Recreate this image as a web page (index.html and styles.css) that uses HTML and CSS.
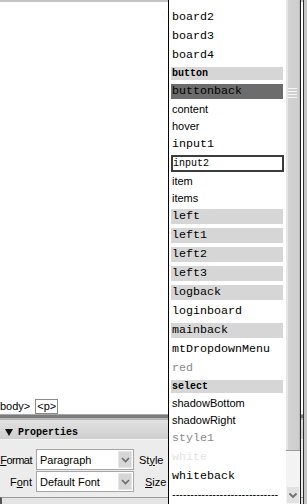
FILE: index.html
```html
<!DOCTYPE html>
<html>
<head>
<meta charset="utf-8">
<link rel="stylesheet" href="styles.css">
</head>
<body>
<div class="screen">
  <div class="main">
    <div class="canvas"></div>
    <div class="tagbar"><span class="tag">body&gt;</span><span class="tag cur">&lt;p&gt;</span></div>
    <div class="sep"></div>
    <div class="phead"><span class="tri"></span><span class="ptitle">Properties</span></div>
    <div class="props">
      <div class="row">
        <span class="lbl tight"><u>F</u>ormat</span>
        <div class="select"><span class="val">Paragraph</span><span class="arrow"><svg width="9" height="6" viewBox="0 0 9 6"><path d="M1 1 L4.5 4.5 L8 1" fill="none" stroke="#6a6a6a" stroke-width="1.6"/></svg></span></div>
        <span class="lbl2">St<u>y</u>le</span>
      </div>
      <div class="row">
        <span class="lbl">F<u>o</u>nt</span>
        <div class="select"><span class="val">Default Font</span><span class="arrow"><svg width="9" height="6" viewBox="0 0 9 6"><path d="M1 1 L4.5 4.5 L8 1" fill="none" stroke="#6a6a6a" stroke-width="1.6"/></svg></span></div>
        <span class="lbl2 right"><u>S</u>ize</span>
      </div>
    </div>
    <div class="pfoot"></div>
  </div>
  <div class="edge"></div>

  <div class="popup">
    <ul class="list">
      <li class="m">board2</li>
      <li class="m">board3</li>
      <li class="m">board4</li>
      <li class="t hl">button</li>
      <li class="m dk">buttonback</li>
      <li class="s">content</li>
      <li class="s">hover</li>
      <li class="m">input1</li>
      <li class="box">input2</li>
      <li class="s">item</li>
      <li class="s">items</li>
      <li class="m hl">left</li>
      <li class="m hl">left1</li>
      <li class="m hl">left2</li>
      <li class="m hl">left3</li>
      <li class="m hl">logback</li>
      <li class="m">loginboard</li>
      <li class="m hl">mainback</li>
      <li class="m">mtDropdownMenu</li>
      <li class="m gray">red</li>
      <li class="t hl">select</li>
      <li class="s">shadowBottom</li>
      <li class="s">shadowRight</li>
      <li class="m gray">style1</li>
      <li class="m faint">white</li>
      <li class="m">whiteback</li>
      <li class="s dash">-----------------------------</li>
    </ul>
    <div class="sb">
      <div class="thumb"><div class="grip"><i></i><i></i><i></i><i></i></div></div>
      <div class="track"></div>
      <div class="sbbtn"><svg width="10" height="7" viewBox="0 0 10 7"><path d="M1.5 1.5 L5 5 L8.5 1.5" fill="none" stroke="#6f6f6f" stroke-width="1.8"/></svg></div>
    </div>
  </div>
</div>
</body>
</html>
```

FILE: styles.css
```css
* { box-sizing: border-box; }
html, body { margin: 0; padding: 0; }
body { width: 307px; height: 504px; overflow: hidden; background: #fff; }

.screen {
  position: relative;
  width: 307px;
  height: 504px;
  display: flex;
  overflow: hidden;
  font-family: "Liberation Sans", Arial, sans-serif;
  font-size: 11px;
  color: #000;
}

.main {
  width: 303px;
  display: flex;
  flex-direction: column;
}

.canvas {
  height: 398px;
  background: #fff;
  border-top: 2px solid #c4c4c4;
}

.tagbar {
  height: 16px;
  background: #fff;
  display: flex;
  align-items: center;
  gap: 1px;
  white-space: nowrap;
  padding-top: 1px;
}
.tag { line-height: 13px; }
.tag.cur {
  margin-left: 4px;
  border: 1px solid #8a8a8a;
  padding: 0 1px;
  line-height: 13px;
  height: 15px;
}

.sep {
  height: 9px;
  background: linear-gradient(#a8a8a8 0, #a8a8a8 1px, #7c7c7c 1px, #7c7c7c 4px, #b8b8b8 4px, #b8b8b8 6px, #e0e0e0 6px);
}

.phead {
  height: 17px;
  background: linear-gradient(#dedede, #cfcfcf);
  display: flex;
  align-items: center;
  padding: 2px 0 0 5px;
  border-bottom: 1px solid #f4f4f4;
}
.tri {
  width: 0; height: 0;
  border-left: 4px solid transparent;
  border-right: 4px solid transparent;
  border-top: 7px solid #111;
  margin-right: 5px;
}
.ptitle {
  font-family: "Liberation Mono", "Courier New", monospace;
  font-size: 10px;
  font-weight: bold;
}

.props {
  height: 57px;
  background: #ececec;
  padding-top: 9px;
  display: flex;
  flex-direction: column;
  gap: 1px;
}
.row {
  height: 21px;
  display: flex;
  align-items: center;
  white-space: nowrap;
}
.lbl {
  width: 32px;
  text-align: right;
  white-space: nowrap;
}
.lbl.tight { letter-spacing: -0.5px; }
.lbl u, .lbl2 u { text-decoration: underline; }
.select {
  margin-left: 4px;
  width: 98px;
  height: 21px;
  background: #fff;
  border: 1px solid #a6a6a6;
  display: flex;
  align-items: center;
  justify-content: space-between;
  padding: 0 1px 0 3px;
}
.arrow {
  width: 14px;
  height: 17px;
  background: #d6d6d6;
  border: 1px solid #e6e6e6;
  display: flex;
  align-items: center;
  justify-content: center;
}
.lbl2 { margin-left: 5px; }
.lbl2.right { margin-left: 11px; }

.pfoot {
  flex: 1;
  background: #e4e4e4;
  border-top: 1px solid #9a9a9a;
  border-left: 2px solid #555;
}

.edge {
  width: 4px;
  background: #c6c6c6;
  border-left: 1px solid #303030;
}

/* dropdown popup */
.popup {
  position: absolute;
  left: 168px;
  top: 0;
  width: 133px;
  height: 520px;
  background: #fff;
  border-left: 1px solid #000;
  border-right: 1px solid #1a1a1a;
  display: flex;
}
.list {
  list-style: none;
  margin: 0;
  padding: 8px 0 0 0;
  width: 117px;
}
.list li {
  margin: 0 3px 0 2px;
  padding-left: 1px;
  white-space: nowrap;
  border-top: 2px solid transparent;
  border-bottom: 2px solid transparent;
  background-clip: padding-box;
  overflow: hidden;
}
.m {
  height: 19px;
  line-height: 15px;
  font-family: "Liberation Mono", "Courier New", monospace;
  font-size: 11.67px;
}
.s {
  height: 17px;
  line-height: 13px;
  font-family: "Liberation Sans", Arial, sans-serif;
  font-size: 11px;
}
.t {
  height: 17px;
  line-height: 13px;
  font-family: "Liberation Mono", "Courier New", monospace;
  font-size: 10px;
  font-weight: bold;
}
.hl { background-color: #d6d6d6; }
.dk { background-color: #6c6c6c; }
.gray { color: #8a8a8a; }
.faint { color: #e4e4e4; }
.list li.box {
  height: 17px;
  margin-top: 1px;
  margin-bottom: 1px;
  border: 2px solid #3c3c3c;
  padding-left: 0;
  line-height: 13px;
  font-family: "Liberation Mono", "Courier New", monospace;
  font-size: 10px;
  margin-right: 2px;
}
.dash { color: #000; }

.sb {
  width: 14px;
  display: flex;
  flex-direction: column;
}
.thumb {
  height: 450px;
  background: linear-gradient(90deg, #e6e6e6 0, #e6e6e6 2px, #d2d2d2 2px, #cecece 100%);
  border-right: 1px solid #bdbdbd;
  padding-top: 88px;
}
.grip {
  margin-left: 2px;
  width: 9px;
  display: flex;
  flex-direction: column;
  gap: 2px;
}
.grip i {
  display: block;
  height: 1px;
  background: #f6f6f6;
}
.track {
  height: 36px;
  background: #f3f3f3;
  border-top: 1px solid #9c9c9c;
}
.sbbtn {
  height: 18px;
  background: #e2e2e2;
  border: 1px solid #f4f4f4;
  display: flex;
  align-items: center;
  justify-content: center;
}
```
